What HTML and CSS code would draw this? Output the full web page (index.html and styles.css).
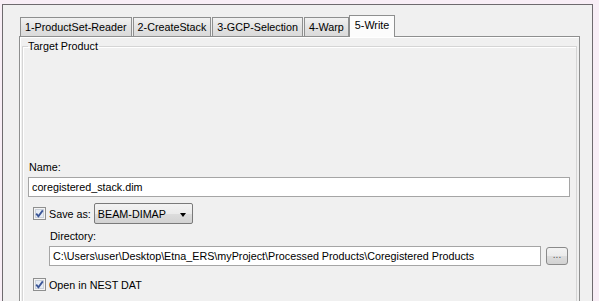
FILE: index.html
```html
<!DOCTYPE html>
<html lang="en">
<head>
    <meta charset="UTF-8">
    <title>Write</title>
    <link rel="stylesheet" href="styles.css">
</head>
<body>
<div class="frame">
    <!-- tab row -->
    <ul class="tabs">
        <li class="tab">1-ProductSet-Reader</li>
        <li class="tab">2-CreateStack</li>
        <li class="tab">3-GCP-Selection</li>
        <li class="tab">4-Warp</li>
        <li class="tab tab-on">5-Write</li>
    </ul>
    <div class="tabpanel">
        <fieldset class="group">
            <legend>Target Product</legend>
            <div class="empty"></div>
            <div class="label">Name:</div>
            <div class="field">coregistered_stack.dim</div>
            <div class="checkrow">
                <span class="check">
                    <svg width="13" height="13" viewBox="0 0 13 13">
                        <rect x="0.5" y="0.5" width="12" height="12" fill="#f4f4f4" stroke="#8e8f8f"/>
                        <rect x="2.5" y="2.5" width="8" height="8" fill="#e6ecf4" stroke="#c9d0da"/>
                        <path d="M3.2 6.6 L5.4 9.2 L9.8 3.4" fill="none" stroke="#3a5597" stroke-width="1.8"/>
                    </svg>
                </span>
                <span>Save as:</span>
                <div class="combo">
                    <span>BEAM-DIMAP</span>
                    <span class="arrow"></span>
                </div>
            </div>
            <div class="dir">
                <div class="label">Directory:</div>
                <div class="dirrow">
                    <div class="field grow">C:\Users\user\Desktop\Etna_ERS\myProject\Processed Products\Coregistered Products</div>
                    <div class="btn">...</div>
                </div>
            </div>
            <div class="checkrow open">
                <span class="check">
                    <svg width="13" height="13" viewBox="0 0 13 13">
                        <rect x="0.5" y="0.5" width="12" height="12" fill="#f4f4f4" stroke="#8e8f8f"/>
                        <rect x="2.5" y="2.5" width="8" height="8" fill="#e6ecf4" stroke="#c9d0da"/>
                        <path d="M3.2 6.6 L5.4 9.2 L9.8 3.4" fill="none" stroke="#3a5597" stroke-width="1.8"/>
                    </svg>
                </span>
                <span>Open in NEST DAT</span>
            </div>
        </fieldset>
    </div>
</div>
</body>
</html>
```

FILE: styles.css
```css
*{
    margin: 0;
    padding: 0;
    list-style-type: none;
    box-sizing: border-box;
}
html,body{
    height: 301px;
    overflow: hidden;
}
body{
    background: #f8eef6;
    font-family: "Liberation Sans", Arial, sans-serif;
    font-size: 10.75px;
    color: #000;
}
.frame{
    width: 591px;
    margin: 4px 0 0 2px;
    border: solid 1px #6e6a6e;
    background: #f0f0f0;
    padding: 10px 12px 0 16px;
}
/* tabs */
.tabs{
    display: flex;
    align-items: flex-end;
    height: 22px;
    margin: 0 0 -1px 1px;
    position: relative;
    z-index: 2;
}
.tab{
    height: 19px;
    line-height: 13px;
    padding: 3px 4px 2px 4px;
    margin: 0 1px 1px 0;
    border: solid 1px #8e8f8f;
    border-bottom: none;
    background: linear-gradient(#f2f2f2, #e3e3e3 50%, #dadada);
    white-space: nowrap;
}
.tab-on{
    height: 22px;
    padding: 3px 5px 5px 5px;
    margin: 0 0 0 -1px;
    background: #fcfcfc;
}
.tabpanel{
    width: 561px;
    border: solid 1px #8e8f8f;
    box-shadow: inset 1px 1px 0 #fff;
    padding: 3px 2px 0 2px;
}
/* titled border */
.group{
    margin: 0;
    border: solid 1px #d5d5d5;
    box-shadow: inset 1px 1px 0 #fff;
    padding: 0 6px 20px 5px;
    min-width: 0;
}
.group legend{
    line-height: 13px;
    padding: 0 1px 0 0;
}
.empty{
    height: 108px;
}
.label{
    line-height: 13px;
    padding-left: 1px;
}
.field{
    height: 20px;
    margin-top: 3px;
    border: solid 1px #a5a5a5;
    background: #fff;
    line-height: 18px;
    padding: 0 3px;
    white-space: nowrap;
    overflow: hidden;
}
.checkrow{
    display: flex;
    align-items: center;
    height: 21px;
    margin-top: 6px;
    padding-left: 5px;
}
.check{
    width: 13px;
    height: 13px;
    margin-right: 3px;
    display: flex;
}
.combo{
    width: 99px;
    height: 21px;
    margin-left: 3px;
    border: solid 1px #7a7a7a;
    border-radius: 2px;
    background: linear-gradient(#f3f3f3, #ebebeb 50%, #dddddd 51%, #d2d2d2);
    display: flex;
    align-items: center;
    justify-content: space-between;
    padding: 0 6px 0 3px;
}
.arrow{
    width: 0;
    height: 0;
    border-left: 3.5px solid transparent;
    border-right: 3.5px solid transparent;
    border-top: 4px solid #000;
    margin-top: 2px;
}
.dir{
    margin: 6px 0 0 21px;
}
.dirrow{
    display: flex;
    align-items: center;
    margin-top: 3px;
}
.dirrow .field{
    margin-top: 0;
}
.grow{
    flex: 1;
}
.btn{
    width: 22px;
    height: 18px;
    margin: 0 2px 0 5px;
    border: solid 1px #8a8a8a;
    border-radius: 3px;
    background: linear-gradient(#f3f3f3, #ebebeb 50%, #dddddd 51%, #d2d2d2);
    color: #555;
    text-align: center;
    line-height: 14px;
    font-size: 10px;
}
.open{
    height: 13px;
    margin-top: 12px;
}
```
